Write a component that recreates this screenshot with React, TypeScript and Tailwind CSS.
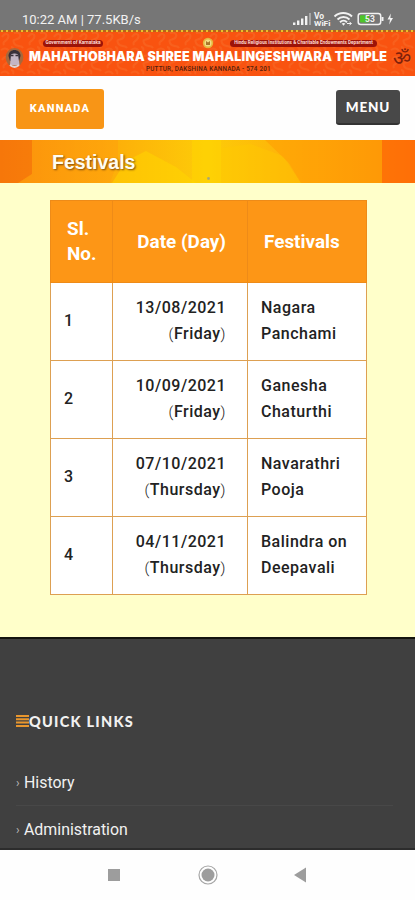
import React from 'react';

interface Festival {
    no: number;
    date: string;
    day: string;
    name: [string, string];
}

const festivals: Festival[] = [
    { no: 1, date: '13/08/2021', day: 'Friday', name: ['Nagara', 'Panchami'] },
    { no: 2, date: '10/09/2021', day: 'Friday', name: ['Ganesha', 'Chaturthi'] },
    { no: 3, date: '07/10/2021', day: 'Thursday', name: ['Navarathri', 'Pooja'] },
    { no: 4, date: '04/11/2021', day: 'Thursday', name: ['Balindra on', 'Deepavali'] },
];

const StatusBar: React.FC = () => (
    <div className="flex h-[30px] items-center justify-between bg-[#767676] pt-2 pr-[20px] pl-[22px] text-[#f2f2f2]">
        <span className="text-[13px] leading-none">10:22 AM | 77.5KB/s</span>
        <svg width="103" height="16" viewBox="0 0 103 16" fill="none">
            <g fill="#f2f2f2">
                <rect x="1" y="11.500" width="2.400" height="2.500" />
                <rect x="5" y="9.500" width="2.400" height="4.500" />
                <rect x="9" y="7.500" width="2.400" height="6.500" />
                <rect x="13" y="5" width="2.400" height="9" />
                <rect x="17" y="2" width="2" height="12" opacity=".4" />
            </g>
            <text x="22" y="7.500" fontSize="8.500" fontWeight="700" fill="#f2f2f2">Vo</text>
            <text x="22" y="15" fontSize="7.500" fontWeight="700" fill="#f2f2f2" textLength="16.500" lengthAdjust="spacingAndGlyphs">WiFi</text>
            <g stroke="#f2f2f2" strokeWidth="2">
                <path d="M42.500 5.500c5-4.600 12.500-4.600 17.500 0" />
                <path d="M45.500 8.400c3.500-3.200 8.500-3.200 12 0" />
                <path d="M48 11.200c2-1.900 5-1.900 7 0" />
            </g>
            <path d="M51.500 14.700l-1.800-2.200c1-.8 2.600-.8 3.600 0z" fill="#f2f2f2" />
            <path d="M55 12.500h4M57.500 11l2 1.500-2 1.500" stroke="#f2f2f2" />
            <rect x="66.200" y="2.400" width="22.500" height="11" rx="2.500" stroke="#f2f2f2" strokeWidth="1.500" />
            <rect x="68" y="4.200" width="9" height="7.400" rx="1" fill="#4fc52a" />
            <text x="73" y="11" fontSize="8.500" fontWeight="700" fill="#f2f2f2">53</text>
            <rect x="89.500" y="6" width="2" height="4" fill="#f2f2f2" />
            <path d="M98.800 2.500l-3.300 6h2.500l-.8 5 3.800-6.500h-2.600z" fill="#f2f2f2" />
        </svg>
    </div>
);

// Swirled orange cloth with a dotted yellow hem
const BannerPattern: React.FC = () => (
    <svg className="absolute inset-0" width="415" height="46">
        <defs>
            <pattern id="swirl" width="26" height="23" patternUnits="userSpaceOnUse">
                <path
                    d="M2 7c3-5 8-3 6 1s-6 3-4 7M14 3c5-2 8 2 5 5s-7 0-5 5 7 1 9 5M1 20c3-2 6-2 8 1M11 17c2 0 3 2 2 4"
                    fill="none"
                    stroke="#f86c28"
                    strokeWidth="2"
                    opacity=".55"
                />
            </pattern>
            <pattern id="hem" width="5" height="3" patternUnits="userSpaceOnUse">
                <rect width="5" height="2" fill="#b9611c" />
                <rect x="1" width="2" height="2" fill="#e8c02c" />
            </pattern>
        </defs>
        <rect width="415" height="46" fill="#f95310" />
        <rect width="415" height="46" fill="url(#swirl)" />
        <rect width="415" height="2" fill="url(#hem)" />
    </svg>
);

const Banner: React.FC = () => (
    <header className="relative h-[46px] overflow-hidden">
        <BannerPattern />
        <div className="relative flex h-full items-center">
            <svg className="mt-[10px] ml-[5px] shrink-0" width="20" height="22" viewBox="0 0 20 22">
                <ellipse cx="9.500" cy="10.500" rx="8.800" ry="9.500" fill="#a7683c" />
                <path d="M3.500 9c0-8 12-8 12 0l-1.500 5H5z" fill="#393139" />
                <path d="M6 7.500c2-1.500 5-1.500 7 0l1.500 10.500H5z" fill="#c4b6c4" />
                <path d="M6 8.500h2.500M10.500 8.500H13" stroke="#393139" strokeWidth="1.300" />
                <path d="M5 18c3 2.500 6 2.500 9 0" stroke="#ded4d7" strokeWidth="2" fill="none" />
            </svg>
            <div className="ml-[4px] flex w-[359px] flex-col pt-[3px]">
                <div className="flex h-[14px] items-center">
                    <span className="ml-[14px] flex h-[7px] w-[60px] items-center justify-center rounded-full bg-[#9c1308] text-[4.800px] leading-none font-bold whitespace-nowrap text-[#ffd9cf]">
                        Government of Karnataka
                    </span>
                    <svg className="ml-[99px] shrink-0" width="12" height="12" viewBox="0 0 12 12">
                        <circle cx="6" cy="6" r="5.200" fill="#e5b93f" />
                        <circle cx="6" cy="6" r="3.500" fill="#f4dd86" />
                        <path d="M4 4l2 1.500L8 4v4H4z" fill="#a9762b" />
                    </svg>
                    <span className="ml-[16px] flex h-[7px] w-[147px] items-center justify-center rounded-full bg-[#9c1308] text-[4.650px] leading-none font-bold whitespace-nowrap text-[#ffd9cf]">
                        Hindu Religious Institutions &amp; Charitable Endowments Department
                    </span>
                </div>
                <h1 className="h-[13px] font-[Inter] text-[12.500px] leading-[13px] font-black tracking-[0.180px] whitespace-nowrap text-white">
                    MAHATHOBHARA SHREE MAHALINGESHWARA TEMPLE
                </h1>
                <p className="ml-[117px] h-[10px] text-[6.300px] leading-[13px] font-medium tracking-[0.220px] whitespace-nowrap text-[#54200c]">
                    PUTTUR, DAKSHINA KANNADA - 574 201
                </p>
            </div>
            <span className="mt-[10px] ml-[5px] font-['DejaVu_Sans'] text-[20px] leading-none text-[#7d200b]">ॐ</span>
        </div>
    </header>
);

const NavButtons: React.FC = () => (
    <div className="flex h-[64px] items-start justify-between bg-[#fefefe] pr-[15px] pl-4">
        <button className="mt-[13px] h-[40px] w-[88px] rounded-[3px] bg-[#f89516] text-[11px] font-extrabold tracking-[1.200px] text-white">
            KANNADA
        </button>
        <button className="mt-[14px] h-[35px] w-[64px] rounded-[3px] border-b-2 border-[#333] bg-[#484848] pt-[2px] font-[Lato] text-[13.500px] font-black tracking-[0.800px] text-white">
            MENU
        </button>
    </div>
);

// Watercolour strip: orange edges fading to yellow in the middle
const PageTitle: React.FC = () => (
    <div className="relative flex h-[43px] items-center bg-linear-to-r from-[#fa8a0a] via-[#fdcc08] via-50% to-[#fc8a0a] pt-[2px] pl-[52px]">
        <svg className="absolute inset-0" width="415" height="43">
            <path d="M0 0h32v34l-14 9H0z" fill="#f2600c" opacity=".45" />
            <path d="M32 0h86v20l-8 23H18l14-9z" fill="#ff9a10" opacity=".4" />
            <path d="M112 43l14-22 20-10 30 16 20 16z" fill="#ffd800" opacity=".5" />
            <path d="M192 0h29v43h-29z" fill="#ffda00" opacity=".4" />
            <path d="M221 8l30-4 32 12 18 27h-80z" fill="#ffcb00" opacity=".4" />
            <path d="M301 43l-12-20-24-23h117v43z" fill="#ff9d04" opacity=".55" />
            <path d="M382 0h33v43h-33z" fill="#ff5d05" opacity=".6" />
            <circle cx="208.500" cy="38.500" r="1.400" fill="#a7a974" />
        </svg>
        <h2 className="relative font-['Liberation_Sans'] text-[19.500px] font-bold text-[#fffdf2] [text-shadow:1px_1px_2px_#7a4a10]">
            Festivals
        </h2>
    </div>
);

const FestivalTable: React.FC = () => (
    <main className="h-[454px] bg-[#ffffca] pt-[17px] pl-[50px]">
        <table className="w-[316px] table-fixed border-collapse bg-white text-[#222]">
            <colgroup>
                <col className="w-[62px]" />
                <col className="w-[135px]" />
                <col className="w-[119px]" />
            </colgroup>
            <thead>
                <tr className="h-[82px] bg-[#fd9616] text-[18.900px] leading-[25px] text-white">
                    <th className="border border-[#ee8b18] pb-px pl-[16px] text-left font-bold">
                        Sl.
                        <br />
                        No.
                    </th>
                    <th className="border border-[#ee8b18] pr-[21px] text-right font-bold">Date (Day)</th>
                    <th className="border border-[#ee8b18] pl-[16px] text-left font-bold">Festivals</th>
                </tr>
            </thead>
            <tbody>
                {festivals.map(({ no, date, day, name }) => (
                    <tr key={no} className="h-[78px] text-[16px] leading-[26px] font-medium tracking-[0.500px]">
                        <td className="border border-[#dda052] pb-px pl-[13px]">{no}</td>
                        <td className="border border-[#dda052] pr-[21px] pb-px text-right">
                            {date}
                            <br />
                            <span className="text-[15px] font-light">(</span>
                            {day}
                            <span className="text-[15px] font-light">)</span>
                        </td>
                        <td className="border border-[#dda052] pb-px pl-[13px]">
                            {name[0]}
                            <br />
                            {name[1]}
                        </td>
                    </tr>
                ))}
            </tbody>
        </table>
    </main>
);

const Footer: React.FC = () => (
    <footer className="h-[213px] border-t-2 border-b-2 border-t-[#14140e] border-b-[#2c2c2c] bg-[#404040] px-4 text-[#f1f1f1]">
        <div className="mt-[72px] flex h-[20px] items-center">
            <svg width="13" height="12" viewBox="0 0 13 12">
                <path d="M0 1h13M0 4.300h13M0 7.600h13M0 11h13" stroke="#e8962e" strokeWidth="2" />
            </svg>
            <h3 className="pt-px font-[Lato] text-[14.500px] font-black tracking-[1.250px]">QUICK LINKS</h3>
        </div>
        <ul className="mt-[28px] mr-[6px] text-[15.900px]">
            {['History', 'Administration'].map((link) => (
                <li key={link} className="flex h-[47px] items-center border-b border-[#484848] pt-px last:border-b-0">
                    <span className="w-[8px] text-[12px] text-[#bbb]">›</span>
                    {link}
                </li>
            ))}
        </ul>
    </footer>
);

const SystemNav: React.FC = () => (
    <nav className="flex h-[50px] items-center bg-[#fefefe] pl-[107px]">
        <svg width="201" height="20" viewBox="0 0 201 20">
            <rect x="1" y="4" width="12" height="12" fill="#9d9d9d" />
            <circle cx="101" cy="10" r="9" fill="none" stroke="#a6a6a6" strokeWidth="1.200" />
            <circle cx="101" cy="10" r="6.500" fill="#9d9d9d" />
            <path d="M187 10l12-7.500v15z" fill="#9d9d9d" />
        </svg>
    </nav>
);

const App: React.FC = () => (
    <div className="h-[900px] w-[415px] overflow-hidden bg-white font-[Roboto,sans-serif]">
        <StatusBar />
        <Banner />
        <NavButtons />
        <PageTitle />
        <FestivalTable />
        <Footer />
        <SystemNav />
    </div>
);

export default App;
